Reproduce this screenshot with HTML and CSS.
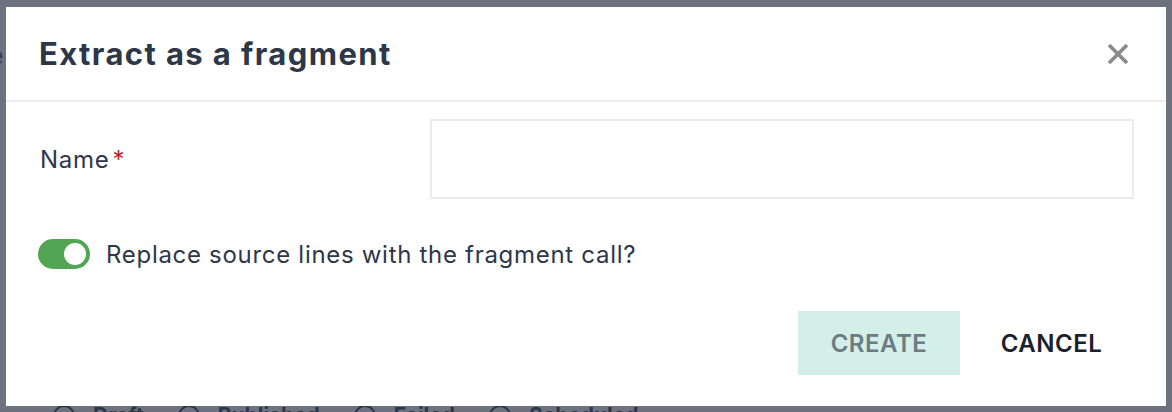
FILE: index.html
```html
<!DOCTYPE html>
<html lang="en">
<head>
<meta charset="utf-8">
<title>Extract as a fragment</title>
<link rel="stylesheet" href="styles.css">
</head>
<body>
<div class="page">
  <div class="page-top">
    <span class="page-letter">e</span>
  </div>
  <div class="status-row">
    <label class="status"><span class="radio"></span>Draft</label>
    <label class="status"><span class="radio"></span>Published</label>
    <label class="status"><span class="radio"></span>Failed</label>
    <label class="status"><span class="radio"></span>Scheduled</label>
  </div>
</div>

<div class="backdrop">
  <div class="modal" role="dialog" aria-labelledby="modal-title">
    <header class="modal-header">
      <h2 id="modal-title" class="modal-title">Extract as a fragment</h2>
      <button class="close-btn" aria-label="Close">
        <svg width="24" height="24" viewBox="0 0 24 24" aria-hidden="true">
          <path d="M3 3 L21 21 M21 3 L3 21" stroke="#8a8a8a" stroke-width="3.6" stroke-linecap="butt" fill="none"/>
        </svg>
      </button>
    </header>
    <div class="modal-body">
      <div class="field-row">
        <label class="field-label" for="name">Name<span class="req">*</span></label>
        <input id="name" class="text-input" type="text">
      </div>
      <div class="toggle-row">
        <span class="toggle"><span class="knob"></span></span>
        <span class="toggle-label">Replace source lines with the fragment call?</span>
      </div>
    </div>
    <footer class="modal-footer">
      <button class="btn btn-create">CREATE</button>
      <button class="btn btn-cancel">CANCEL</button>
    </footer>
  </div>
</div>
</body>
</html>
```

FILE: styles.css
```css
* { box-sizing: border-box; }

html, body {
  margin: 0;
  height: 100%;
}

body {
  font-family: Inter, "Open Sans", "Liberation Sans", sans-serif;
  color: #2d3748;
  background: #ffffff;
  overflow: hidden;
}

.page {
  height: 100%;
  display: flex;
  flex-direction: column;
  justify-content: space-between;
  padding: 40px 0 0 0;
  color: #4a5568;
}

.page-letter {
  font-size: 26px;
  font-weight: 600;
  margin-left: -12px;
}

.status-row {
  display: flex;
  gap: 34px;
  padding-left: 53px;
  margin-bottom: -16px;
  font-size: 21px;
  font-weight: 700;
  color: #2d3748;
}

.status {
  display: flex;
  align-items: center;
  gap: 18px;
}

.radio {
  width: 22px;
  height: 22px;
  border: 2px solid #2d3748;
  border-radius: 50%;
}

.backdrop {
  position: fixed;
  inset: 0;
  background: rgba(45, 55, 72, 0.7);
  padding: 7px 6px 6px 6px;
}

.modal {
  background: #ffffff;
  height: 399px;
  display: flex;
  flex-direction: column;
}

.modal-header {
  height: 95px;
  border-bottom: 2px solid #ececec;
  display: flex;
  align-items: center;
  justify-content: space-between;
  padding: 0 36px 0 33px;
}

.modal-title {
  margin: 0;
  font-size: 31px;
  font-weight: 700;
  color: #2d3748;
  letter-spacing: 1.4px;
}

.close-btn {
  background: none;
  border: 0;
  padding: 0;
  width: 24px;
  height: 24px;
  display: flex;
  cursor: pointer;
}

.modal-body {
  padding: 17px 32px 0 32px;
  display: flex;
  flex-direction: column;
}

.field-row {
  display: grid;
  grid-template-columns: 392px 1fr;
  align-items: center;
}

.field-label {
  font-size: 24px;
  letter-spacing: 0.7px;
  padding-left: 2px;
  color: #2d3748;
}

.req {
  color: #c0251d;
  margin-left: 3px;
}

.text-input {
  height: 80px;
  border: 2px solid #ebebeb;
  background: #ffffff;
  font: inherit;
  outline: none;
}

.toggle-row {
  display: flex;
  align-items: center;
  gap: 16px;
  margin-top: 40px;
}

.toggle {
  width: 52px;
  height: 30px;
  border-radius: 15px;
  background: #52a552;
  display: flex;
  align-items: center;
  justify-content: flex-end;
  padding-right: 4px;
}

.knob {
  width: 22px;
  height: 22px;
  border-radius: 50%;
  background: #ffffff;
}

.toggle-label {
  font-size: 24px;
  letter-spacing: 0.7px;
  color: #2d3748;
}

.modal-footer {
  margin-top: auto;
  display: flex;
  justify-content: flex-end;
  gap: 9px;
  padding: 0 32px 31px 32px;
}

.btn {
  height: 64px;
  padding: 0;
  border: 0;
  font-family: inherit;
  font-size: 24px;
  font-weight: 600;
  letter-spacing: 0.5px;
  background: transparent;
  cursor: pointer;
}

.btn-create {
  background: #d4efe7;
  color: #6b7c85;
  width: 162px;
}

.btn-cancel {
  color: #1a202c;
  width: 165px;
}
```
